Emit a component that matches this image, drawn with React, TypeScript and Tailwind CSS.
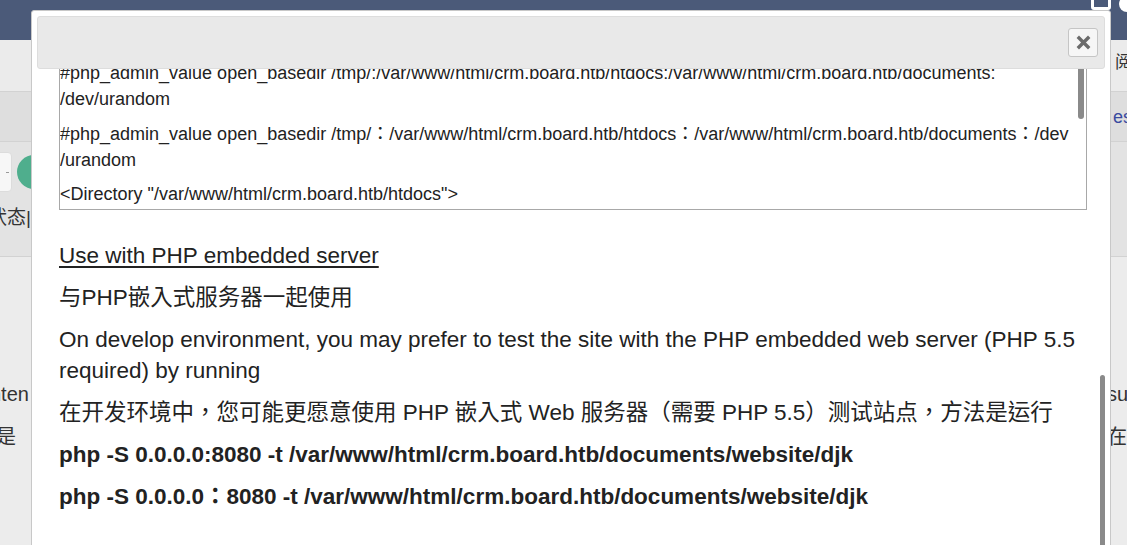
function CloseIcon() {
  return (
    <svg width="15" height="15" viewBox="0 0 15 15" className="text-[#6b6b6b]">
      <path d="M3 3 L12 12 M12 3 L3 12" stroke="currentColor" strokeWidth="3.4" strokeLinecap="square" />
    </svg>
  )
}

export default function App() {
  return (
    <div className="relative h-[545px] w-[1127px] overflow-hidden bg-[#ececec] font-['Liberation_Sans','Noto_Sans_CJK_TC',sans-serif] text-[#222]">
      {/* page behind the dialog */}
      <header className="flex h-[40px] items-start justify-end gap-[8px] bg-[#4b5a79]">
        <div className="mt-[-6px] h-[16px] w-[20px] rounded-[3px] border-[3px] border-white" />
        <div className="mr-[-8px] mt-[-4px] h-[16px] w-[16px] rounded-full bg-white" />
      </header>
      <div className="flex h-[52px] items-center justify-between border-b border-[#d2d2d2] bg-[#ebebeb]">
        <span />
        <span className="mr-[-22px] pb-[6px] text-[17px] text-[#333]">阅读</span>
      </div>
      <div className="flex h-[50px] items-center justify-between border-b border-[#d2d2d2] bg-[#dedede]">
        <span />
        <span className="mr-[-10px] pt-[2px] text-[18px] text-[#3a4aa0]">est</span>
      </div>
      <div className="flex h-[115px] items-start justify-between border-b border-[#d2d2d2] bg-[#e3e3e3]">
        <div className="flex flex-col">
          <div className="mt-[10px] flex items-center gap-[5px]">
            <div className="ml-[-6px] flex h-[40px] w-[18px] items-center justify-end rounded-[4px] border border-[#dcdcdc] bg-[#f7f7f7] pr-[2px]">
              <span className="h-[1px] w-[3px] bg-[#999]" />
            </div>
            <div className="h-[34px] w-[34px] rounded-full bg-[#4fae8d]" />
          </div>
          <span className="ml-[-12px] mt-[12px] text-[19px] text-[#333]">状态|</span>
        </div>
      </div>
      <div className="flex justify-between">
        <div className="ml-[-10px] mt-[123px] flex flex-col gap-[14px] text-[20px] leading-[29px] text-[#333]">
          <span>nten</span>
          <span className="ml-[-14px]">这是</span>
        </div>
        <div className="mr-[-20px] mt-[123px] flex flex-col gap-[14px] text-[20px] leading-[29px] text-[#333]">
          <span>su</span>
          <span>在这</span>
        </div>
      </div>

      {/* dialog */}
      <div className="absolute left-[31px] top-[10px] h-[560px] w-[1080px] rounded-[3px] border border-[#c8c8c8] bg-white p-[5px]">
        <div className="flex h-[53px] items-center justify-end rounded-[3px] border border-[#dddddd] bg-[#e9e9e9] pr-[6px]">
          <button className="flex h-[29px] w-[30px] items-center justify-center rounded-[3px] border border-[#c5c5c5] bg-[#f6f6f6]">
            <CloseIcon />
          </button>
        </div>

        <div className="relative h-[480px] overflow-hidden">
          <div className="-mt-[10px] pl-[22px] pr-[18px]">
            <div className="relative h-[151px] overflow-hidden border border-[#a8a8a8] pr-[12px] text-[18px] leading-[26px] text-[#222]">
              <p className="mb-[9px]">
                #php_admin_value open_basedir /tmp/:/var/www/html/crm.board.htb/htdocs:/var/www/html/crm.board.htb/documents:
                <br />
                /dev/urandom
              </p>
              <p className="mb-[8px]">
                #php_admin_value open_basedir /tmp/：/var/www/html/crm.board.htb/htdocs：/var/www/html/crm.board.htb/documents：/dev
                <br />
                /urandom
              </p>
              <p>&lt;Directory "/var/www/html/crm.board.htb/htdocs"&gt;</p>
              <div className="absolute right-[2px] top-0 h-[59px] w-[6px] rounded-b-[3px] bg-[#8a8a8a]" />
            </div>

            <div className="mt-[30px] text-[22.5px] leading-[31px]">
              <p className="mb-[11px] underline underline-offset-[3px]">Use with PHP embedded server</p>
              <p className="mb-[11px]">与PHP嵌入式服务器一起使用</p>
              <p className="mb-[11px]">
                On develop environment, you may prefer to test the site with the PHP embedded web server (PHP 5.5 required) by running
              </p>
              <p className="mb-[11px]">在开发环境中，您可能更愿意使用 PHP 嵌入式 Web 服务器（需要 PHP 5.5）测试站点，方法是运行</p>
              <p className="mb-[11px] font-bold">php -S 0.0.0.0:8080 -t /var/www/html/crm.board.htb/documents/website/djk</p>
              <p className="mb-[11px] font-bold">php -S 0.0.0.0：8080 -t /var/www/html/crm.board.htb/documents/website/djk</p>
            </div>
          </div>
          <div className="absolute right-0 top-[306px] h-[200px] w-[5px] rounded-t-[3px] bg-[#8a8a8a]" />
        </div>
      </div>
    </div>
  )
}
